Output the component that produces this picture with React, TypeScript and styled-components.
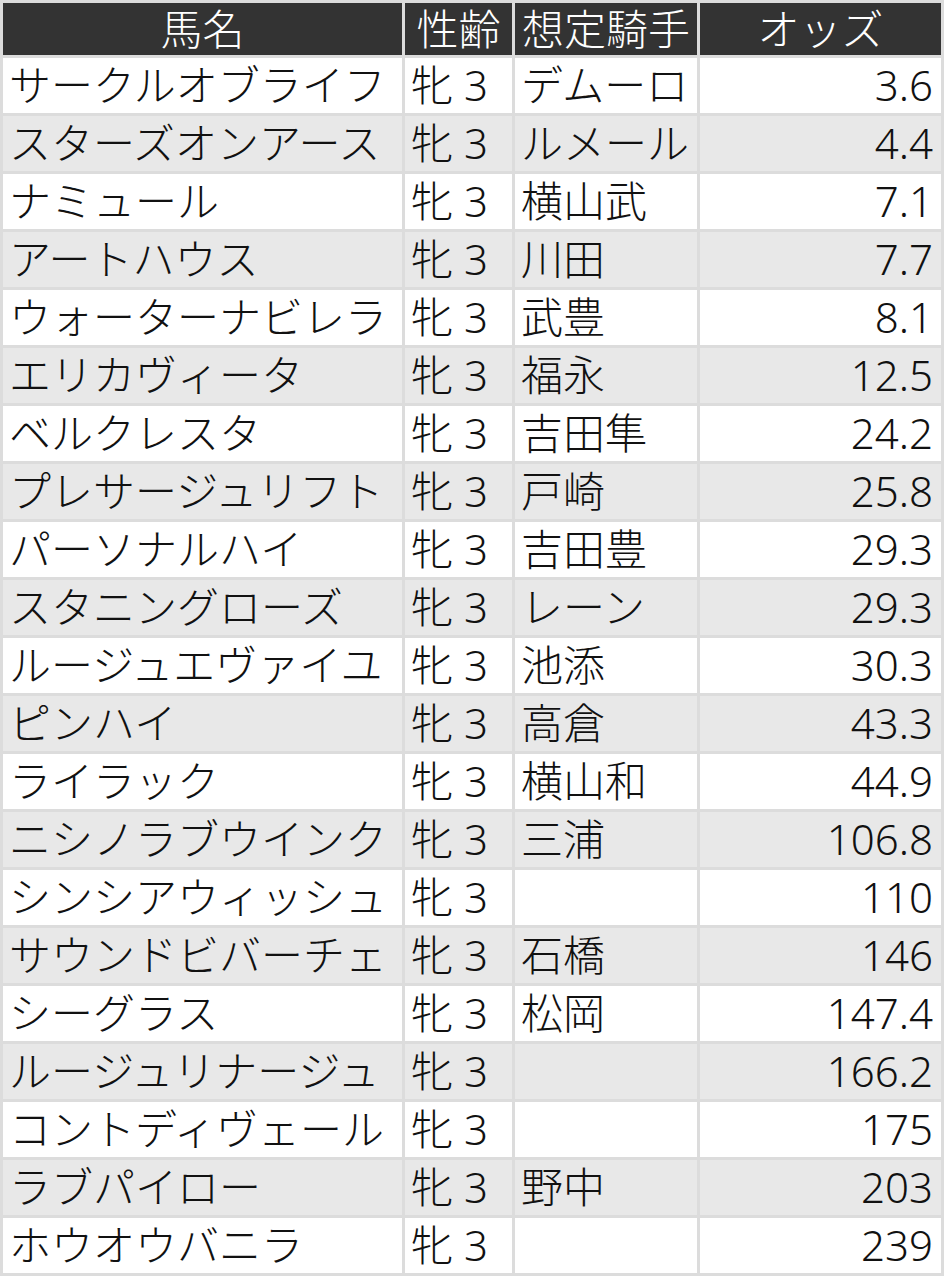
import React from 'react';
import styled, { createGlobalStyle } from 'styled-components';

const GlobalStyle = createGlobalStyle`
  html, body {
    margin: 0;
    padding: 0;
    background: #fff;
  }
  body {
    font-family: "Noto Sans", "Noto Sans CJK JP", sans-serif;
  }
`;

const Table = styled.table`
  border-collapse: separate;
  border-spacing: 3px;
  background: #dcdcdc;
  table-layout: fixed;
  width: 944px;
  font-size: 42px;
  font-weight: 300;
  line-height: 1.2;
`;

const HeadCell = styled.th`
  height: 52px;
  padding: 0;
  background: #333;
  color: #fff;
  font-weight: 300;
  text-align: center;
  vertical-align: middle;
  white-space: nowrap;
`;

const Row = styled.tr<{ $alt: boolean }>`
  background: ${p => (p.$alt ? '#e8e8e8' : '#fff')};
`;

const Cell = styled.td<{ $right?: boolean }>`
  height: 55px;
  padding: 0 ${p => (p.$right ? '8px' : '0')} 0 ${p => (p.$right ? '0' : '6px')};
  color: #111;
  text-align: ${p => (p.$right ? 'right' : 'left')};
  vertical-align: middle;
  white-space: nowrap;
`;

type Horse = { name: string; jockey: string; odds: string };

const horses: Horse[] = [
  { name: 'サークルオブライフ', jockey: 'デムーロ', odds: '3.6' },
  { name: 'スターズオンアース', jockey: 'ルメール', odds: '4.4' },
  { name: 'ナミュール', jockey: '横山武', odds: '7.1' },
  { name: 'アートハウス', jockey: '川田', odds: '7.7' },
  { name: 'ウォーターナビレラ', jockey: '武豊', odds: '8.1' },
  { name: 'エリカヴィータ', jockey: '福永', odds: '12.5' },
  { name: 'ベルクレスタ', jockey: '吉田隼', odds: '24.2' },
  { name: 'プレサージュリフト', jockey: '戸崎', odds: '25.8' },
  { name: 'パーソナルハイ', jockey: '吉田豊', odds: '29.3' },
  { name: 'スタニングローズ', jockey: 'レーン', odds: '29.3' },
  { name: 'ルージュエヴァイユ', jockey: '池添', odds: '30.3' },
  { name: 'ピンハイ', jockey: '高倉', odds: '43.3' },
  { name: 'ライラック', jockey: '横山和', odds: '44.9' },
  { name: 'ニシノラブウインク', jockey: '三浦', odds: '106.8' },
  { name: 'シンシアウィッシュ', jockey: '', odds: '110' },
  { name: 'サウンドビバーチェ', jockey: '石橋', odds: '146' },
  { name: 'シーグラス', jockey: '松岡', odds: '147.4' },
  { name: 'ルージュリナージュ', jockey: '', odds: '166.2' },
  { name: 'コントディヴェール', jockey: '', odds: '175' },
  { name: 'ラブパイロー', jockey: '野中', odds: '203' },
  { name: 'ホウオウバニラ', jockey: '', odds: '239' },
];

const App = () => (
  <>
    <GlobalStyle />
    <Table>
      <colgroup>
        <col style={{ width: 399 }} />
        <col style={{ width: 107 }} />
        <col style={{ width: 182 }} />
        <col style={{ width: 241 }} />
      </colgroup>
      <thead>
        <tr>
          <HeadCell>馬名</HeadCell>
          <HeadCell>性齢</HeadCell>
          <HeadCell>想定騎手</HeadCell>
          <HeadCell>オッズ</HeadCell>
        </tr>
      </thead>
      <tbody>
        {horses.map((h, i) => (
          <Row key={h.name} $alt={i % 2 === 1}>
            <Cell>{h.name}</Cell>
            <Cell>牝 3</Cell>
            <Cell>{h.jockey}</Cell>
            <Cell $right>{h.odds}</Cell>
          </Row>
        ))}
      </tbody>
    </Table>
  </>
);

export default App;
